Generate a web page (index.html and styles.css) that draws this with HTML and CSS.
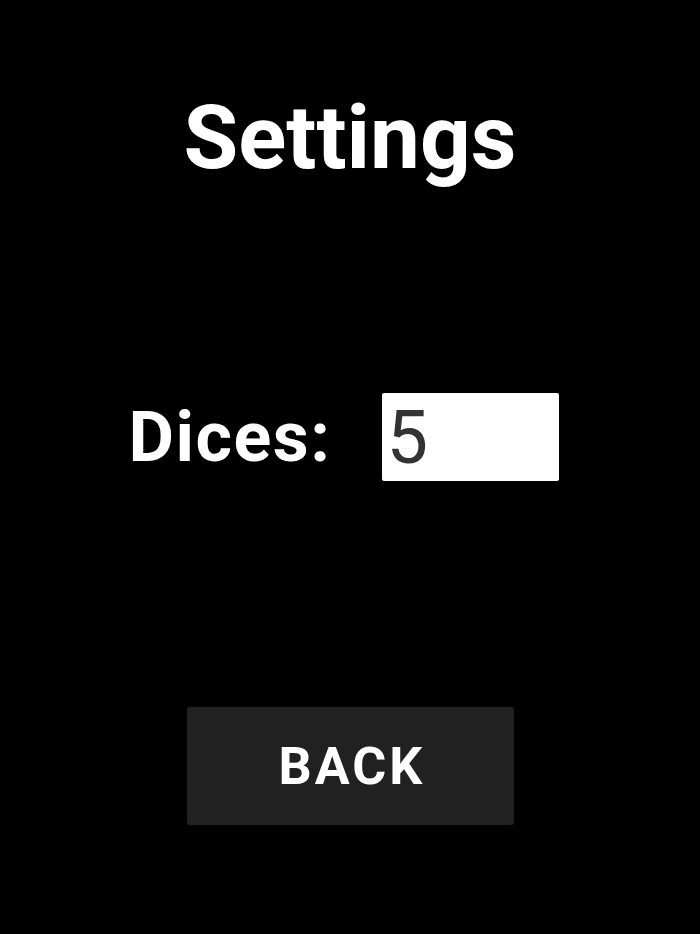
FILE: index.html
```html
<!DOCTYPE html>
<html lang="en">
<head>
    <meta charset="UTF-8">
    <meta name="viewport" content="width=device-width, initial-scale=1.0">
    <title>Settings</title>
    <link rel="stylesheet" href="styles.css">
</head>
<body>
    <div class="screen">
        <h1 class="title">Settings</h1>

        <div class="setting-row">
            <label class="setting-label" for="dices">Dices:</label>
            <input class="setting-input" id="dices" type="text" value="5">
        </div>

        <button class="back-button" type="button">BACK</button>
    </div>
</body>
</html>
```

FILE: styles.css
```css
* {
    margin: 0;
    padding: 0;
    box-sizing: border-box;
    font-family: Roboto, 'Liberation Sans', sans-serif;
}

body {
    background-color: #000;
    color: #fff;
    min-height: 100vh;
}

.screen {
    display: flex;
    flex-direction: column;
    align-items: center;
    height: 934px;
    padding-top: 88px;
}

.title {
    font-size: 89px;
    font-weight: 700;
    line-height: 100px;
}

.setting-row {
    display: flex;
    align-items: center;
    margin-top: 205px;
    margin-right: 12px;
    gap: 51px;
}

.setting-label {
    font-size: 70px;
    font-weight: 700;
    letter-spacing: 1.5px;
}

.setting-input {
    width: 177px;
    height: 88px;
    border: none;
    border-radius: 2px;
    background: #fff;
    color: #333;
    font-size: 74px;
    padding: 0 4px;
    outline: none;
}

.back-button {
    margin-top: 226px;
    width: 327px;
    height: 118px;
    padding-left: 4px;
    background-color: #212121;
    color: #fff;
    border: none;
    border-radius: 3px;
    font-size: 52px;
    font-weight: 700;
    letter-spacing: 3px;
    cursor: pointer;
}
```
